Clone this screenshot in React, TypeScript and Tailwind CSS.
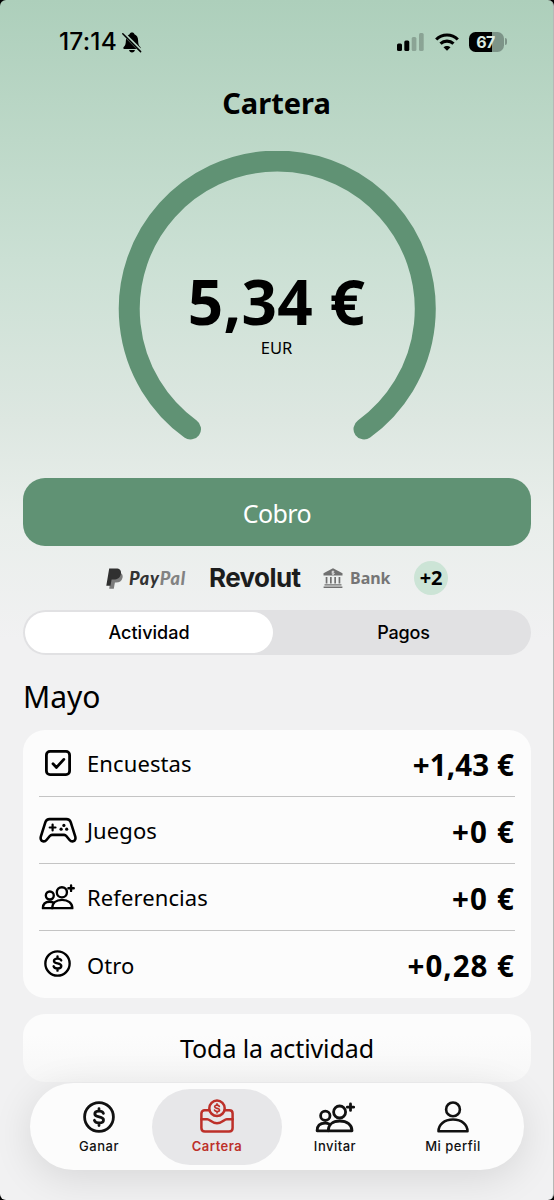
import React from 'react';

interface IconProps {
  className?: string;
}

interface ActivityRow {
  label: string;
  amount: string;
  icon: React.ReactNode;
  amountClass: string;
}

interface NavItem {
  label: string;
  icon: React.ReactNode;
  active?: boolean;
}

const DollarIcon: React.FC<IconProps> = ({ className }) => (
  <svg viewBox="0 0 32 32" className={className} fill="none" stroke="currentColor" strokeWidth="2.8" strokeLinecap="round" strokeLinejoin="round">
    <circle cx="16" cy="16" r="14.4" />
    <path d="M20.4 12.4c-.5-1.400-2-2.200-4.300-2.200-2.600 0-4.300 1-4.300 2.800 0 4 8.700 1.900 8.700 5.900 0 1.800-1.700 3-4.400 3-2.600 0-4.200-1-4.700-2.600M16 7.700v2.500M16 21.900v2.600" />
  </svg>
);

const CheckIcon: React.FC<IconProps> = ({ className }) => (
  <svg viewBox="0 0 28 28" className={className} fill="none" stroke="currentColor" strokeWidth="2.8" strokeLinecap="round" strokeLinejoin="round">
    <rect x="2.400" y="2.400" width="23.200" height="23.200" rx="3.600" />
    <path d="M9 14.800l3.500 3.600 7.300-8" />
  </svg>
);

const GamepadIcon: React.FC<IconProps> = ({ className }) => (
  <svg viewBox="0 0 38 28" className={className} fill="none" stroke="currentColor" strokeWidth="2.600" strokeLinecap="round" strokeLinejoin="round">
    <path d="M10.600 3.100h16.800c2.200 0 3.600 1 4.300 3l4.500 14.200c.7 2.200-.1 4.500-2 5-1.500.3-2.700-.2-3.600-1.300l-3.300-4c-.6-.7-1.300-1.100-2.200-1.100H13c-.9 0-1.600.4-2.200 1.100l-3.300 4c-.9 1.100-2.200 1.600-3.600 1.300-1.900-.5-2.700-2.800-2-5L6.400 6.100c.7-2 2-3 4.200-3z" />
    <path d="M13.600 8.600v5.800M10.700 11.500h5.800" strokeWidth="2.200" />
    <g fill="currentColor" stroke="none">
      <circle cx="24.900" cy="9.400" r="1.600" />
      <circle cx="22.100" cy="13.200" r="1.600" />
      <circle cx="27.700" cy="13.200" r="1.600" />
    </g>
  </svg>
);

const PeopleIcon: React.FC<IconProps> = ({ className }) => (
  <svg viewBox="0 0 40 32" className={className} fill="none" stroke="currentColor" strokeWidth="2.800" strokeLinecap="round" strokeLinejoin="round">
    <circle cx="10.300" cy="14.800" r="4.700" />
    <circle cx="24.600" cy="11" r="6" />
    <path d="M13.200 29.800c0-5.900 4.300-9.800 11.600-9.800s12.200 3.900 12.200 9.800z" />
    <path d="M13.200 29.800H2.100c0-4.700 2.900-7.600 8-7.600 1.900 0 3.300.4 4.500 1" />
    <path d="M35.500 3v6.400M32.300 6.200h6.400" />
  </svg>
);

const ProfileIcon: React.FC<IconProps> = ({ className }) => (
  <svg viewBox="0 0 32 32" className={className} fill="none" stroke="currentColor" strokeWidth="2.600" strokeLinejoin="round">
    <circle cx="16" cy="8.400" r="6.900" />
    <path d="M1.500 30.300c0-6.600 5.600-11.800 14.500-11.800s14.500 5.200 14.500 11.800z" />
  </svg>
);

const WalletIcon: React.FC<IconProps> = ({ className }) => (
  <svg viewBox="0 0 34 34" className={className} fill="none" stroke="currentColor" strokeWidth="2.500" strokeLinecap="round" strokeLinejoin="round">
    <path d="M9 11.200H4.700c-2 0-3.300 1.200-3.300 3.200v14.700c0 2.200 1.300 3.500 3.500 3.500h24.200c2.200 0 3.500-1.300 3.500-3.500V14.400c0-2-1.300-3.200-3.300-3.200H25" />
    <path d="M1.400 20.300h5.800c2.800 0 4.500 4 9.800 4s7-4 9.800-4h5.800" />
    <circle cx="17" cy="9.300" r="7.700" />
    <path d="M19.300 7.400c-.3-.8-1.100-1.200-2.300-1.200-1.400 0-2.300.6-2.300 1.500 0 2.300 4.800 1 4.800 3.200 0 1-.9 1.600-2.400 1.600-1.400 0-2.300-.5-2.600-1.400M17 4.900v1.300M17 12.500v1.300" strokeWidth="1.700" />
  </svg>
);

const BellOffIcon: React.FC<IconProps> = ({ className }) => (
  <svg viewBox="0 0 20 21" className={className}>
    <path fill="currentColor" d="M10 .5c1.300 0 2.200.7 2.400 1.700 2.400.9 3.700 3 3.700 6 0 4 .9 5.500 2.200 6.700.8.8.5 2-.7 2H2.400c-1.200 0-1.500-1.200-.7-2 1.300-1.200 2.200-2.700 2.200-6.700 0-3 1.300-5.100 3.700-6C7.800 1.200 8.700.5 10 .5zM7.100 18h5.800c-.2 1.500-1.300 2.500-2.900 2.500S7.300 19.500 7.100 18z" />
    <path d="M1.500 1.500L19 19" stroke="#b1d0bf" strokeWidth="3.400" />
    <path d="M.8 1.800l17.800 17.800" stroke="currentColor" strokeWidth="1.500" strokeLinecap="round" />
  </svg>
);

const StatusBar: React.FC = () => (
  <div className="flex h-[83px] items-center justify-between pl-[59px] pr-[46px]">
    <div className="flex items-center">
      <span className="w-[63px] font-['Inter'] text-[24.500px] font-medium leading-none tracking-[0.200px]">17:14</span>
      <BellOffIcon className="mt-[1px] h-[21px] w-[20px]" />
    </div>
    <div className="flex items-center">
      <svg viewBox="0 0 28 18" className="h-[18px] w-[28px] fill-current">
        <rect x="0" y="10.500" width="5" height="7.500" rx="1.500" />
        <rect x="7.300" y="7.500" width="5" height="10.500" rx="1.500" />
        <rect x="14.700" y="4" width="4.700" height="14" rx="1.500" opacity=".22" />
        <rect x="22" y="0" width="4.700" height="18" rx="1.500" opacity=".22" />
      </svg>
      <svg viewBox="0 0 24 18" className="ml-[10px] h-[18px] w-[24px]" fill="none" stroke="currentColor" strokeWidth="3.100">
        <path d="M1.200 6.500c6-6 15.600-6 21.600 0" />
        <path d="M5.500 10.700c3.700-3.500 9.300-3.500 13 0" />
        <path d="M8.500 14.300c2-1.900 5-1.900 7 0L12 17.800z" fill="currentColor" stroke="none" />
      </svg>
      <div className="ml-[10px] flex h-[20px] w-[35px] items-center justify-center rounded-[6.500px] bg-[linear-gradient(90deg,#000_0_23px,#7d9488_23px)] pr-[2px] font-['Inter'] text-[16px] font-bold leading-none tracking-[-0.500px] text-[#dcebe2]">
        67
      </div>
      <div className="ml-[1px] h-[7px] w-[2px] rounded-r-full bg-[#7d9488]" />
    </div>
  </div>
);

const BalanceRing: React.FC = () => (
  <div className="relative mt-[28px] h-[290px]">
    <svg viewBox="0 0 320 290" className="mx-auto h-[290px] w-[320px]" fill="none">
      <path d="M73.500 278A148 148 0 1 1 247 278" stroke="#609274" strokeWidth="21" strokeLinecap="round" />
    </svg>
    <div className="absolute inset-x-0 top-[125px] flex flex-col items-center">
      <span className="h-[50px] text-[62px] font-bold leading-[50px] tracking-[0.300px]">5,34 €</span>
      <span className="mt-[14px] h-[16px] text-[16.500px] leading-[16px]">EUR</span>
    </div>
  </div>
);

const PaymentMethods: React.FC = () => (
  <div className="mt-[15px] flex h-[34px] items-center pl-[106px]">
    <svg viewBox="0 0 17 21" className="h-[21px] w-[17px]">
      <path fill="#7b7b7b" d="M5.600 4.600h8.200c2.400.9 3.300 2.800 2.700 5.200-.8 3.300-3 4.800-6.400 4.800H8.900l-1.100 6.200H3.200z" />
      <path fill="#303030" d="M3.200.4h6.900c3.700 0 5.500 2 4.800 5.500-.8 3.900-3.400 5.600-7.200 5.600H5.600l-1.100 6.200H.3z" />
    </svg>
    <span className="ml-[6px] w-[61px] font-['Lato'] text-[18px] font-black italic leading-none tracking-[0.800px] text-[#333]">
      Pay<span className="text-[#828282]">Pal</span>
    </span>
    <span className="ml-[19px] w-[93px] font-['Inter'] text-[26px] font-bold leading-none tracking-[-0.600px] text-[#1c1d1d]">Revolut</span>
    <svg viewBox="0 0 20 20" className="ml-[21px] h-[20px] w-[20px]" fill="#707070">
      <path d="M10 .2l9.500 5v2.300H.5V5.200z" />
      <path d="M2.700 9h1.700v6.500H2.700zM7 9h1.700v6.500H7zM11.300 9H13v6.500h-1.700zM15.600 9h1.700v6.500h-1.700zM1.500 16.200h17v1.200h-17zM.6 18.600h18.800v1.300H.6z" />
      <path d="M11.300 3.700c-1-.7-2.600-.5-2.600.4 0 1 2.600.5 2.600 1.400 0 .9-1.600 1-2.600.3M10 2.800v4" stroke="#efefef" strokeWidth=".8" fill="none" />
    </svg>
    <span className="ml-[7px] w-[42px] text-[16px] font-bold leading-none text-[#757575]">Bank</span>
    <span className="ml-[22px] flex size-[34px] items-center justify-center rounded-full bg-[#cce4d6] text-[20px] font-bold leading-none tracking-[-0.300px]">+2</span>
  </div>
);

const rows: ActivityRow[] = [
  { label: 'Encuestas', amount: '+1,43 €', icon: <CheckIcon className="size-[28px]" />, amountClass: 'tracking-[0.100px]' },
  { label: 'Juegos', amount: '+0 €', icon: <GamepadIcon className="h-[28px] w-[38px] shrink-0" />, amountClass: 'tracking-[1.200px] -mr-[1px]' },
  { label: 'Referencias', amount: '+0 €', icon: <PeopleIcon className="-mt-[2px] h-[27px] w-[34px]" />, amountClass: 'tracking-[1.200px] -mr-[1px]' },
  { label: 'Otro', amount: '+0,28 €', icon: <DollarIcon className="-mt-[2px] size-[27px]" />, amountClass: 'tracking-[1px] -mr-[1px]' },
];

const navItems: NavItem[] = [
  { label: 'Ganar', icon: <DollarIcon className="size-[32px]" /> },
  { label: 'Cartera', icon: <WalletIcon className="size-[34px]" />, active: true },
  { label: 'Invitar', icon: <PeopleIcon className="h-[32px] w-[40px]" /> },
  { label: 'Mi perfil', icon: <ProfileIcon className="size-[32px]" /> },
];

const App: React.FC = () => {
  return (
    <div className="h-[1200px] w-[554px] overflow-hidden bg-black font-['Noto_Sans',sans-serif] text-black">
      <div className="flex h-full flex-col overflow-hidden rounded-[6px] border-r border-[#b5b8b6] bg-[linear-gradient(180deg,#adcfbb_0px,#bdd8c8_140px,#cbe0d4_260px,#dde7e1_420px,#e9eeeb_520px,#f1f1f2_640px,#f1f1f2_100%)]">
        <StatusBar />
        <h1 className="h-[40px] text-center text-[29px] font-bold leading-[40px]">Cartera</h1>
        <BalanceRing />

        <div className="px-[23px]">
          <button className="mt-[37px] block h-[68px] w-[508px] rounded-[22px] bg-[#609274] pt-[4px] text-[25px] tracking-[-0.600px] text-white">
            Cobro
          </button>
        </div>
        <PaymentMethods />

        <div className="mx-[23px] mt-[15px] flex h-[45px] w-[508px] rounded-full bg-[#e1e1e3] p-[2px] font-['Inter'] text-[18px] font-medium">
          <div className="flex w-[248px] items-center justify-center rounded-full bg-white">Actividad</div>
          <div className="flex flex-1 items-center justify-center pl-[5px] tracking-[-0.200px]">Pagos</div>
        </div>

        <h2 className="ml-[23px] mt-[22px] h-[40px] text-[30px] leading-[40px]">Mayo</h2>

        <div className="mx-[23px] mt-[13px] h-[268px] w-[508px] rounded-[22px] bg-[#fcfcfc] px-[16px]">
          {rows.map((row) => (
            <div key={row.label} className="flex h-[67px] items-center border-b border-[#c4c4c4] last:border-b-0">
              <div className="flex w-[37px] shrink-0 justify-center">{row.icon}</div>
              <span className="ml-[11px] mt-[1px] text-[22px] tracking-[0.100px]">{row.label}</span>
              <span className={`ml-auto mt-[3px] pr-[1px] text-[29.500px] font-bold leading-none ${row.amountClass}`}>{row.amount}</span>
            </div>
          ))}
        </div>

        <button className="mx-[23px] mt-[16px] h-[68px] w-[508px] shrink-0 rounded-[22px] bg-[linear-gradient(180deg,#fcfcfc_30%,#f7f7f7_100%)] pt-[2px] text-[25px] tracking-[-0.100px]">
          Toda la actividad
        </button>

        <nav className="z-10 ml-[30px] mt-[1px] flex h-[87px] w-[494px] shrink-0 items-center rounded-full bg-[#fcfcfc] pl-[10px] shadow-[0_8px_40px_rgba(0,0,0,0.11)]">
          {navItems.map((item) => (
            <div key={item.label} className="flex w-[118px] shrink-0 justify-center">
              <div
                className={`flex h-[76px] w-[130px] shrink-0 flex-col items-center rounded-full ${item.active ? 'bg-[#e7e7e9] text-[#bd3029]' : 'text-[#111]'}`}
              >
                <div className="mt-[9px] flex h-[35px] items-end">{item.icon}</div>
                <span className={`mt-[4px] font-['Inter'] text-[13px] leading-[18px] tracking-[0.500px] ${item.active ? 'font-semibold' : 'font-medium'}`}>{item.label}</span>
              </div>
            </div>
          ))}
        </nav>
      </div>
    </div>
  );
};

export default App;
